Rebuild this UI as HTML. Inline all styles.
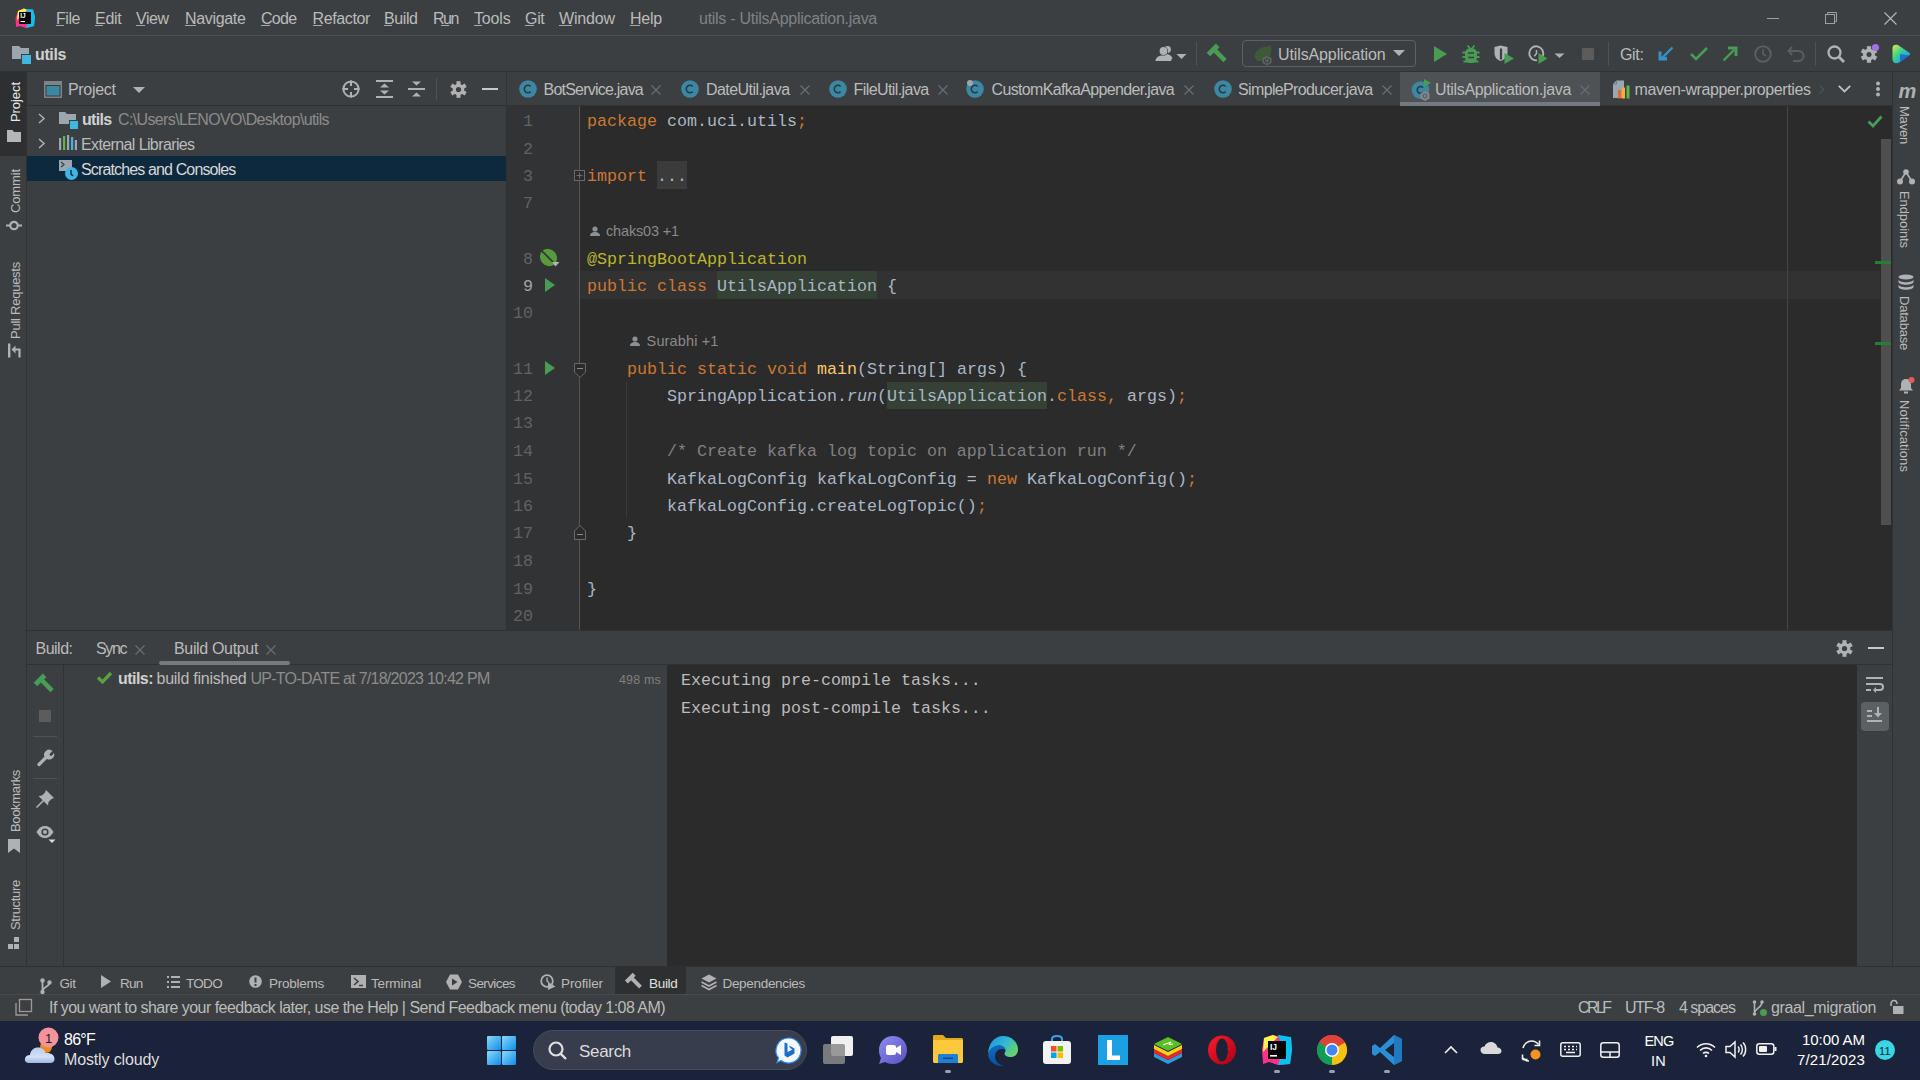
<!DOCTYPE html>
<html><head><meta charset="utf-8"><title>IntelliJ</title>
<style>
*{margin:0;padding:0;box-sizing:border-box}
html,body{width:1920px;height:1080px;overflow:hidden;background:#3c3f41}
body{position:relative;font-family:"Liberation Sans",sans-serif;font-size:15px;color:#bbbbbb}
.a{position:absolute}
.t{position:absolute;white-space:pre;line-height:1}
svg{position:absolute;overflow:visible}
</style></head><body>
<div class="a" style="left:0px;top:0px;width:1920px;height:35px;background:#3c3f41"></div>
<div class="a" style="left:0px;top:35px;width:1920px;height:1px;background:#505050"></div>
<div class="a" style="left:0px;top:36px;width:1920px;height:35px;background:#3c3f41"></div>
<div class="a" style="left:0px;top:71px;width:1920px;height:1px;background:#313131"></div>
<svg style="left:15px;top:8px" width="20" height="20"><polygon points="3,3 9,0.5 13,2 18,1.5 20,9 19,18 11,20 5,18 1,19 0.5,10" fill="#ff318c"/>
<polygon points="11,1 18,1.5 20,9 19,18 11,20 14,9" fill="#07c3f2"/>
<polygon points="3,3 9,0.5 12,2 2,12" fill="#fcf84a"/>
<rect x="4" y="4" width="12" height="12" fill="#000"/>
<text x="5.3" y="10.2" font-size="6.5" font-weight="bold" fill="#fff" font-family="Liberation Sans">IJ</text>
<rect x="5.5" y="13" width="4.5" height="1.1" fill="#fff"/></svg>
<div class="t" style="left:56px;top:11px;font:16px 'Liberation Sans';line-height:1;color:#bbbbbb;letter-spacing:-0.445px">File</div>
<div class="a" style="left:56px;top:25px;width:8px;height:1px;background:#a8a8a8"></div>
<div class="t" style="left:95px;top:11px;font:16px 'Liberation Sans';line-height:1;color:#bbbbbb;letter-spacing:-0.270px">Edit</div>
<div class="a" style="left:95px;top:25px;width:8px;height:1px;background:#a8a8a8"></div>
<div class="t" style="left:136px;top:11px;font:16px 'Liberation Sans';line-height:1;color:#bbbbbb;letter-spacing:-0.473px">View</div>
<div class="a" style="left:136px;top:25px;width:9px;height:1px;background:#a8a8a8"></div>
<div class="t" style="left:185px;top:11px;font:16px 'Liberation Sans';line-height:1;color:#bbbbbb;letter-spacing:-0.332px">Navigate</div>
<div class="a" style="left:185px;top:25px;width:11px;height:1px;background:#a8a8a8"></div>
<div class="t" style="left:261px;top:11px;font:16px 'Liberation Sans';line-height:1;color:#bbbbbb;letter-spacing:-0.688px">Code</div>
<div class="a" style="left:261px;top:25px;width:9px;height:1px;background:#a8a8a8"></div>
<div class="t" style="left:312.5px;top:11px;font:16px 'Liberation Sans';line-height:1;color:#bbbbbb;letter-spacing:-0.371px">Refactor</div>
<div class="a" style="left:312.5px;top:25px;width:9px;height:1px;background:#a8a8a8"></div>
<div class="t" style="left:384px;top:11px;font:16px 'Liberation Sans';line-height:1;color:#bbbbbb;letter-spacing:-0.416px">Build</div>
<div class="a" style="left:384px;top:25px;width:8px;height:1px;background:#a8a8a8"></div>
<div class="t" style="left:433px;top:11px;font:16px 'Liberation Sans';line-height:1;color:#bbbbbb;letter-spacing:-1.453px">Run</div>
<div class="a" style="left:441px;top:25px;width:8px;height:1px;background:#a8a8a8"></div>
<div class="t" style="left:474px;top:11px;font:16px 'Liberation Sans';line-height:1;color:#bbbbbb;letter-spacing:-0.172px">Tools</div>
<div class="a" style="left:474px;top:25px;width:8px;height:1px;background:#a8a8a8"></div>
<div class="t" style="left:525px;top:11px;font:16px 'Liberation Sans';line-height:1;color:#bbbbbb;letter-spacing:-0.318px">Git</div>
<div class="a" style="left:525px;top:25px;width:9px;height:1px;background:#a8a8a8"></div>
<div class="t" style="left:559px;top:11px;font:16px 'Liberation Sans';line-height:1;color:#bbbbbb;letter-spacing:-0.151px">Window</div>
<div class="a" style="left:559px;top:25px;width:13px;height:1px;background:#a8a8a8"></div>
<div class="t" style="left:630px;top:11px;font:16px 'Liberation Sans';line-height:1;color:#bbbbbb;letter-spacing:-0.227px">Help</div>
<div class="a" style="left:630px;top:25px;width:10px;height:1px;background:#a8a8a8"></div>
<div class="t" style="left:699px;top:11px;font:16px 'Liberation Sans';line-height:1;color:#808284;letter-spacing:-0.271px">utils - UtilsApplication.java</div>
<div class="a" style="left:1767px;top:18px;width:12px;height:1px;background:#a0a0a0"></div>
<svg style="left:1825px;top:12px" width="13" height="13"><rect x="0.5" y="2.5" width="9" height="9" fill="none" stroke="#a0a0a0"/><path d="M2.5 2.5V0.5H11.5V9.5H9.5" fill="none" stroke="#a0a0a0"/></svg>
<svg style="left:1884px;top:12px" width="13" height="13"><path d="M0.5 0.5L12.5 12.5M12.5 0.5L0.5 12.5" stroke="#b8b8b8" stroke-width="1.1"/></svg>
<svg style="left:12px;top:46px" width="19" height="18"><path d="M0 0H7L9 2H17V13H0Z" fill="#9aa7b0"/><rect x="9" y="8" width="10" height="10" fill="#3c3f41"/><rect x="10" y="9" width="9" height="9" fill="#40b6e0"/></svg>
<div class="t" style="left:35px;top:47px;font:bold 16px 'Liberation Sans';line-height:1;color:#cfcfcf;letter-spacing:-0.378px">utils</div>
<svg style="left:1155px;top:45px" width="34" height="18"><circle cx="12.5" cy="4.5" r="3.4" fill="#afb1b3"/><path d="M9.5 9C13 8.5 17 10 17.5 14H12Z" fill="#afb1b3"/><circle cx="3.5" cy="3.5" r="0" fill="none"/><circle cx="8.5" cy="6" r="4.6" fill="#3c3f41"/><circle cx="8.5" cy="6" r="3.9" fill="#afb1b3"/><path d="M0.5 16C0.5 12.5 3.5 10.5 8.5 10.5C13.5 10.5 16.5 12.5 16.5 16Z" fill="#afb1b3"/><path d="M21.5 9H31.5L26.5 14Z" fill="#afb1b3"/></svg>
<div class="a" style="left:1196px;top:42px;width:1px;height:24px;background:#505355"></div>
<svg style="left:1208px;top:44px" width="20" height="19"><g transform="translate(10 9.5) rotate(-45)"><rect x="-7.5" y="-8.5" width="13" height="5" fill="#499c54"/><rect x="-2.3" y="-4" width="4.6" height="14" fill="#499c54"/></g></svg>
<div class="a" style="left:1242px;top:40px;width:174px;height:27px;background:transparent;border:1px solid #5e6163;border-radius:4px"></div>
<svg style="left:1254px;top:45px" width="22" height="22"><path d="M0.5 12C0.5 6.5 6 2.5 11 2C13.5 1.8 15.5 1 16.5 0C18 4 17.5 9 14.5 12.5C11.5 15.5 7 16.5 3 16Z" fill="#3c5a38"/><polygon points="13,10.5 17.5,13 17.5,18 13,20.5 8.5,18 8.5,13" fill="#5c6367"/><path d="M11.3 13.8A2.4 2.4 0 1 0 14.7 13.8M13 12.3V15" fill="none" stroke="#3c3f41" stroke-width="1.1"/></svg>
<div class="t" style="left:1278px;top:47px;font:16px 'Liberation Sans';line-height:1;color:#bbbbbb;letter-spacing:-0.118px">UtilsApplication</div>
<svg style="left:1393px;top:50px" width="12" height="8"><path d="M0 0H12L6 6Z" fill="#afb1b3"/></svg>
<svg style="left:1434px;top:46px" width="14" height="16"><path d="M0 0L13 8L0 16Z" fill="#499c54"/></svg>
<svg style="left:1462px;top:44px" width="18" height="20"><path d="M5.5 1.5L8 4.5M12.5 1.5L10 4.5" stroke="#499c54" stroke-width="1.8"/><rect x="3" y="4" width="12" height="15" rx="5.5" fill="#499c54"/><path d="M0.5 8.5H17.5M0.5 13H17.5M1.5 17.5H16.5" stroke="#499c54" stroke-width="2"/><path d="M6 9H12M6 13.5H12" stroke="#3c3f41" stroke-width="1.6"/></svg>
<svg style="left:1494px;top:45px" width="20" height="20"><path d="M0.5 2L6.5 0.5L13.5 2V8C13.5 12 10.5 14.5 6.5 16C2.5 14.5 0.5 12 0.5 8Z" fill="#afb1b3"/><path d="M7 3.5V14.5" stroke="#3c3f41" stroke-width="2.2"/><path d="M9 3H13V5H9Z" fill="#afb1b3"/><path d="M10.5 8L20 13.5L10.5 19Z" fill="#499c54"/></svg>
<svg style="left:1528px;top:45px" width="40" height="20"><path d="M14.5 11.5A7 7 0 1 0 9 15.3" fill="none" stroke="#afb1b3" stroke-width="1.9"/><path d="M8.5 5V8.5L6.3 11.3" stroke="#afb1b3" stroke-width="1.5" fill="none"/><path d="M10.5 8L19.5 13.5L10.5 19Z" fill="#499c54"/><path d="M26.5 8.5H36.5L31.5 13Z" fill="#afb1b3"/></svg>
<div class="a" style="left:1582px;top:48px;width:12px;height:12px;background:#5c5c5c"></div>
<div class="a" style="left:1608px;top:42px;width:1px;height:24px;background:#505355"></div>
<div class="t" style="left:1620px;top:47px;font:16px 'Liberation Sans';line-height:1;color:#bbbbbb;letter-spacing:-0.348px">Git:</div>
<svg style="left:1658px;top:46px" width="16" height="16"><path d="M14.5 1.5L4 12" stroke="#3592c4" stroke-width="2.4"/><path d="M0.5 5.5H3.5V11L9 11V14.5H0.5Z" fill="#3592c4"/></svg>
<svg style="left:1690px;top:47px" width="18" height="14"><path d="M1 7L6 12L17 1" stroke="#499c54" stroke-width="2.6" fill="none"/></svg>
<svg style="left:1722px;top:46px" width="16" height="16"><path d="M1.5 14.5L12 4" stroke="#499c54" stroke-width="2.4"/><path d="M6 0.5H15.5V10H12.5V3.5H6Z" fill="#499c54"/></svg>
<svg style="left:1754px;top:45px" width="18" height="18"><circle cx="9" cy="9" r="7.8" fill="none" stroke="#5b5e60" stroke-width="2"/><path d="M9 4V9L12 11" stroke="#5b5e60" stroke-width="1.6" fill="none"/></svg>
<svg style="left:1787px;top:46px" width="18" height="16"><path d="M5 1L1.5 5L5 9M1.5 5H11C14 5 16.5 7 16.5 10C16.5 13 14 15 11 15H6" stroke="#5b5e60" stroke-width="2" fill="none"/></svg>
<div class="a" style="left:1815px;top:42px;width:1px;height:24px;background:#505355"></div>
<svg style="left:1827px;top:45px" width="18" height="18"><circle cx="7.5" cy="7.5" r="6" fill="none" stroke="#afb1b3" stroke-width="2.3"/><path d="M12 12L17 17" stroke="#afb1b3" stroke-width="2.8"/></svg>
<svg style="left:1859px;top:44px" width="20" height="20"><g transform="translate(10 10.5)"><circle r="6" fill="#afb1b3"/><g fill="#afb1b3"><rect x="-2.1" y="-8.3" width="4.2" height="16.6"/><rect x="-2.1" y="-8.3" width="4.2" height="16.6" transform="rotate(60)"/><rect x="-2.1" y="-8.3" width="4.2" height="16.6" transform="rotate(120)"/></g><circle r="2.5" fill="#3c3f41"/></g><circle cx="16.5" cy="3.5" r="3.6" fill="#a571e6"/></svg>
<svg style="left:1891px;top:44px" width="20" height="20"><defs><linearGradient id="jg" x1="0" y1="0" x2="1" y2="1"><stop offset="0" stop-color="#e6e84a"/><stop offset=".4" stop-color="#3fd38a"/><stop offset=".75" stop-color="#19a6e6"/><stop offset="1" stop-color="#2a6fdc"/></linearGradient></defs><path d="M1.5 4C1.5 1 4 0 7 1L18 8.5C19.5 9.5 19.5 10.5 18 11.5L9 18C5 20.5 1.5 19 1.5 15Z" fill="url(#jg)"/><path d="M9 10L18 11.5L9 18Z" fill="#1c5fd8" opacity=".8"/></svg>
<div class="a" style="left:0px;top:72px;width:26px;height:894px;background:#3c3f41"></div>
<div class="a" style="left:0px;top:72px;width:26px;height:84px;background:#2d2f30"></div>
<div class="a" style="left:26px;top:72px;width:1px;height:894px;background:#313131"></div>
<div class="t" style="left:9px;top:-11px;font:13px 'Liberation Sans';line-height:1;color:#e8e8e8;letter-spacing:-0.067px;top:122px;transform:rotate(-90deg);transform-origin:0 0">Project</div>
<svg style="left:7px;top:130px" width="14" height="12"><path d="M0 0H5.5L7 2H14V12H0Z" fill="#b4b6b8"/></svg>
<div class="t" style="left:9px;top:-11px;font:13px 'Liberation Sans';line-height:1;color:#bbbbbb;letter-spacing:-0.130px;top:213px;transform:rotate(-90deg);transform-origin:0 0">Commit</div>
<svg style="left:6px;top:220px" width="16" height="11"><circle cx="8" cy="5.5" r="3.7" fill="none" stroke="#afb1b3" stroke-width="2.2"/><path d="M0 5.5H4M12 5.5H16" stroke="#afb1b3" stroke-width="2.2"/></svg>
<div class="t" style="left:9px;top:-11px;font:13px 'Liberation Sans';line-height:1;color:#bbbbbb;letter-spacing:-0.248px;top:339px;transform:rotate(-90deg);transform-origin:0 0">Pull Requests</div>
<svg style="left:8px;top:343px" width="14" height="15"><path d="M1.2 0.5V14.5" stroke="#afb1b3" stroke-width="2.4"/><path d="M11.5 14.5V6.5H7" stroke="#afb1b3" stroke-width="2.2" fill="none"/><path d="M3.5 6.5L7.5 2.5V10.5Z" fill="#afb1b3"/></svg>
<div class="t" style="left:9px;top:-11px;font:13px 'Liberation Sans';line-height:1;color:#bbbbbb;letter-spacing:-0.337px;top:832px;transform:rotate(-90deg);transform-origin:0 0">Bookmarks</div>
<svg style="left:8px;top:839px" width="12" height="14"><path d="M0 0H12V14L6 9.5L0 14Z" fill="#afb1b3"/></svg>
<div class="t" style="left:9px;top:-11px;font:13px 'Liberation Sans';line-height:1;color:#bbbbbb;letter-spacing:-0.306px;top:930px;transform:rotate(-90deg);transform-origin:0 0">Structure</div>
<svg style="left:8px;top:937px" width="13" height="13"><rect x="6" y="0" width="5" height="5" fill="#afb1b3"/><rect x="0" y="7" width="5" height="5" fill="#afb1b3"/><rect x="6" y="7" width="5" height="5" fill="#afb1b3"/></svg>
<div class="a" style="left:27px;top:72px;width:479px;height:558px;background:#3c3f41"></div>
<div class="a" style="left:27px;top:105px;width:479px;height:1px;background:#313131"></div>
<div class="a" style="left:27px;top:156px;width:479px;height:25px;background:#0d293e"></div>
<div class="a" style="left:506px;top:72px;width:1px;height:558px;background:#313131"></div>
<svg style="left:44px;top:81px" width="18" height="17"><rect x="0" y="0" width="18" height="17" fill="#7a858b"/><rect x="1.5" y="4" width="15" height="11.5" fill="#3a3d3f"/><rect x="2.5" y="5" width="13" height="9.5" fill="#3d87a2"/></svg>
<div class="t" style="left:68px;top:82px;font:16px 'Liberation Sans';line-height:1;color:#bbbbbb;letter-spacing:-0.328px">Project</div>
<svg style="left:133px;top:87px" width="12" height="7"><path d="M0 0H12L6 6Z" fill="#afb1b3"/></svg>
<svg style="left:342px;top:80px" width="18" height="18"><circle cx="9" cy="9" r="7.6" fill="none" stroke="#afb1b3" stroke-width="2"/><path d="M9 0.5V6M9 12V17.5M0.5 9H6M12 9H17.5" stroke="#afb1b3" stroke-width="2"/></svg>
<svg style="left:376px;top:80px" width="17" height="18"><path d="M0 1H17M0 17H17" stroke="#afb1b3" stroke-width="2"/><path d="M4 7.5L8.5 3.5L13 7.5Z M4 10.5L8.5 14.5L13 10.5Z" fill="#afb1b3"/></svg>
<svg style="left:408px;top:80px" width="17" height="18"><path d="M0 9H17" stroke="#afb1b3" stroke-width="2"/><path d="M4 1.5L8.5 5.5L13 1.5Z M4 16.5L8.5 12.5L13 16.5Z" fill="#afb1b3"/></svg>
<div class="a" style="left:436px;top:78px;width:1px;height:22px;background:#505355"></div>
<svg style="left:450px;top:81px" width="17" height="17" viewBox="-8.5 -8.5 17 17"><circle r="5.8" fill="#afb1b3"/><g fill="#afb1b3"><rect x="-2" y="-8.3" width="4" height="16.6"/><rect x="-2" y="-8.3" width="4" height="16.6" transform="rotate(60)"/><rect x="-2" y="-8.3" width="4" height="16.6" transform="rotate(120)"/></g><circle r="2.6" fill="#3c3f41"/></svg>
<div class="a" style="left:482px;top:88px;width:16px;height:2px;background:#c8c8c8"></div>
<svg style="left:38px;top:113px" width="8" height="11"><path d="M1 1L6 5.5L1 10" stroke="#afb1b3" stroke-width="1.5" fill="none"/></svg>
<svg style="left:59px;top:112px" width="19" height="17"><path d="M0 0H6L8 2H17V12H0Z" fill="#9aa7b0"/><rect x="10" y="8" width="9" height="9" fill="#3c3f41"/><rect x="11" y="9" width="8" height="8" fill="#40b6e0"/></svg>
<div class="t" style="left:82px;top:112px;font:bold 16px 'Liberation Sans';line-height:1;color:#d0d0d0;letter-spacing:-0.678px">utils</div>
<div class="t" style="left:118px;top:112px;font:16px 'Liberation Sans';line-height:1;color:#8c8c8c;letter-spacing:-0.635px">C:\Users\LENOVO\Desktop\utils</div>
<svg style="left:38px;top:138px" width="8" height="11"><path d="M1 1L6 5.5L1 10" stroke="#afb1b3" stroke-width="1.5" fill="none"/></svg>
<svg style="left:59px;top:135px" width="18" height="15"><rect x="0" y="3" width="2.2" height="12" fill="#9aa7b0"/><rect x="4" y="1" width="2.2" height="14" fill="#62b543"/><rect x="8" y="0" width="2.2" height="15" fill="#9aa7b0"/><rect x="12" y="2" width="2.2" height="13" fill="#40b6e0"/><rect x="15.8" y="5" width="2.2" height="10" fill="#9aa7b0"/></svg>
<div class="t" style="left:81px;top:137px;font:16px 'Liberation Sans';line-height:1;color:#bbbbbb;letter-spacing:-0.611px">External Libraries</div>
<svg style="left:59px;top:160px" width="19" height="20"><rect x="0" y="0" width="13" height="11" fill="#9aa7b0"/><path d="M2 2L5 4.5L2 7" stroke="#3c3f41" stroke-width="1.2" fill="none"/><circle cx="12.5" cy="13.5" r="6.5" fill="#40b6e0"/><path d="M12 10V14L14 16" stroke="#0d293e" stroke-width="1.5" fill="none"/></svg>
<div class="t" style="left:81px;top:162px;font:16px 'Liberation Sans';line-height:1;color:#d8d8d8;letter-spacing:-0.861px">Scratches and Consoles</div>
<div class="a" style="left:1892px;top:72px;width:1px;height:894px;background:#313131"></div>
<div class="a" style="left:1893px;top:72px;width:27px;height:894px;background:#3c3f41"></div>
<div class="t" style="left:1898.5px;top:81px;font:italic bold 20px 'Liberation Sans';line-height:1;color:#afb1b3;letter-spacing:-0.797px">m</div>
<div class="t" style="left:1911px;top:-11px;font:13px 'Liberation Sans';line-height:1;color:#bbbbbb;letter-spacing:-0.206px;top:106px;transform:rotate(90deg);transform-origin:0 0">Maven</div>
<svg style="left:1897px;top:169px" width="18" height="16"><circle cx="9" cy="3" r="2.8" fill="#afb1b3"/><circle cx="3" cy="12.5" r="3" fill="#afb1b3"/><circle cx="15" cy="12.5" r="3" fill="#afb1b3"/><path d="M9 3L3 12.5M9 3L15 12.5" stroke="#afb1b3" stroke-width="1.6"/></svg>
<div class="t" style="left:1911px;top:-11px;font:13px 'Liberation Sans';line-height:1;color:#bbbbbb;letter-spacing:-0.092px;top:191px;transform:rotate(90deg);transform-origin:0 0">Endpoints</div>
<svg style="left:1898px;top:274px" width="16" height="16"><ellipse cx="8" cy="3" rx="7.5" ry="2.6" fill="#afb1b3"/><path d="M0.5 5.5C0.5 7 4 8.2 8 8.2C12 8.2 15.5 7 15.5 5.5V8C15.5 9.5 12 10.7 8 10.7C4 10.7 0.5 9.5 0.5 8Z" fill="#afb1b3"/><path d="M0.5 10.5C0.5 12 4 13.2 8 13.2C12 13.2 15.5 12 15.5 10.5V13C15.5 14.5 12 15.7 8 15.7C4 15.7 0.5 14.5 0.5 13Z" fill="#afb1b3"/></svg>
<div class="t" style="left:1911px;top:-11px;font:13px 'Liberation Sans';line-height:1;color:#bbbbbb;letter-spacing:-0.207px;top:296px;transform:rotate(90deg);transform-origin:0 0">Database</div>
<svg style="left:1898px;top:377px" width="17" height="17"><path d="M8 2C4.5 2 3 4.5 3 7.5V11L1 13.5H15L13 11V7.5C13 4.5 11.5 2 8 2Z" fill="#afb1b3"/><rect x="6" y="14.5" width="4" height="2" fill="#afb1b3"/><circle cx="13.5" cy="3" r="3" fill="#e55a5a"/></svg>
<div class="t" style="left:1911px;top:-11px;font:13px 'Liberation Sans';line-height:1;color:#bbbbbb;letter-spacing:0.091px;top:400px;transform:rotate(90deg);transform-origin:0 0">Notifications</div>
<div class="a" style="left:507px;top:72px;width:1385px;height:33px;background:#3c3f41"></div>
<div class="a" style="left:507px;top:105px;width:1385px;height:1px;background:#323232"></div>
<div class="a" style="left:1400px;top:72px;width:200px;height:33px;background:#4e5254"></div>
<div class="a" style="left:1400px;top:102px;width:200px;height:4px;background:#747a80"></div>
<svg style="left:518px;top:79px" width="20" height="20"><circle cx="10" cy="10" r="8.8" fill="#3d87a2"/><path d="M12.6 7.4A3.7 3.7 0 1 0 12.6 12.6" fill="none" stroke="#243a45" stroke-width="1.5"/></svg>
<div class="t" style="left:543.5px;top:82px;font:16px 'Liberation Sans';line-height:1;color:#bbbbbb;letter-spacing:-0.778px">BotService.java</div>
<svg style="left:651px;top:84.5px" width="10" height="10"><path d="M0.5 0.5L9.5 9.5M9.5 0.5L0.5 9.5" stroke="#6b6d6f" stroke-width="1.2"/></svg>
<svg style="left:680px;top:79px" width="20" height="20"><circle cx="10" cy="10" r="8.8" fill="#3d87a2"/><path d="M12.6 7.4A3.7 3.7 0 1 0 12.6 12.6" fill="none" stroke="#243a45" stroke-width="1.5"/></svg>
<div class="t" style="left:706px;top:82px;font:16px 'Liberation Sans';line-height:1;color:#bbbbbb;letter-spacing:-0.554px">DateUtil.java</div>
<svg style="left:799.5px;top:84.5px" width="10" height="10"><path d="M0.5 0.5L9.5 9.5M9.5 0.5L0.5 9.5" stroke="#6b6d6f" stroke-width="1.2"/></svg>
<svg style="left:828px;top:79px" width="20" height="20"><circle cx="10" cy="10" r="8.8" fill="#3d87a2"/><path d="M12.6 7.4A3.7 3.7 0 1 0 12.6 12.6" fill="none" stroke="#243a45" stroke-width="1.5"/></svg>
<div class="t" style="left:853.6px;top:82px;font:16px 'Liberation Sans';line-height:1;color:#bbbbbb;letter-spacing:-0.591px">FileUtil.java</div>
<svg style="left:938px;top:84.5px" width="10" height="10"><path d="M0.5 0.5L9.5 9.5M9.5 0.5L0.5 9.5" stroke="#6b6d6f" stroke-width="1.2"/></svg>
<svg style="left:965px;top:79px" width="20" height="20"><circle cx="10" cy="10" r="8.8" fill="#3d87a2"/><path d="M12.6 7.4A3.7 3.7 0 1 0 12.6 12.6" fill="none" stroke="#243a45" stroke-width="1.5"/></svg>
<div class="t" style="left:991.5px;top:82px;font:16px 'Liberation Sans';line-height:1;color:#bbbbbb;letter-spacing:-0.660px">CustomKafkaAppender.java</div>
<svg style="left:1184px;top:84.5px" width="10" height="10"><path d="M0.5 0.5L9.5 9.5M9.5 0.5L0.5 9.5" stroke="#6b6d6f" stroke-width="1.2"/></svg>
<svg style="left:1213px;top:79px" width="20" height="20"><circle cx="10" cy="10" r="8.8" fill="#3d87a2"/><path d="M12.6 7.4A3.7 3.7 0 1 0 12.6 12.6" fill="none" stroke="#243a45" stroke-width="1.5"/></svg>
<div class="t" style="left:1238px;top:82px;font:16px 'Liberation Sans';line-height:1;color:#bbbbbb;letter-spacing:-0.639px">SimpleProducer.java</div>
<svg style="left:1381.6px;top:84.5px" width="10" height="10"><path d="M0.5 0.5L9.5 9.5M9.5 0.5L0.5 9.5" stroke="#6b6d6f" stroke-width="1.2"/></svg>
<div class="t" style="left:1435px;top:82px;font:16px 'Liberation Sans';line-height:1;color:#bbbbbb;letter-spacing:-0.342px">UtilsApplication.java</div>
<svg style="left:1580px;top:84.5px" width="10" height="10"><path d="M0.5 0.5L9.5 9.5M9.5 0.5L0.5 9.5" stroke="#6b6d6f" stroke-width="1.2"/></svg>
<svg style="left:966px;top:79px" width="8" height="8"><circle cx="4" cy="4" r="3" fill="#9aa7b0"/></svg>
<svg style="left:1411px;top:79px" width="22" height="22"><circle cx="9.5" cy="11" r="8.8" fill="#3d87a2"/><path d="M12 8.6A3.4 3.4 0 1 0 12 13.4" fill="none" stroke="#243a45" stroke-width="1.5"/><path d="M13 0L20 4L13 8Z" fill="#499c54"/><polygon points="14,12 18.5,14.5 18.5,19.5 14,22 9.5,19.5 9.5,14.5" fill="#7e8a91"/><circle cx="14" cy="17" r="2" fill="none" stroke="#4e5254" stroke-width="1"/></svg>
<svg style="left:1612px;top:80px" width="19" height="19"><path d="M1 4L4.5 0.5H12V18H1Z" fill="#9aa7b0"/><path d="M1 4H4.5V0.5" fill="none" stroke="#6f7a80" stroke-width="1"/><rect x="6" y="10" width="3" height="8.5" fill="#f26522"/><rect x="10" y="7.5" width="3" height="11" fill="#f4af3d"/><rect x="14.5" y="5.5" width="3" height="13" fill="#62b543"/></svg>
<div class="t" style="left:1634.5px;top:82px;font:16px 'Liberation Sans';line-height:1;color:#bbbbbb;letter-spacing:-0.411px">maven-wrapper.properties</div>
<svg style="left:1819px;top:85px" width="6" height="9"><path d="M0.5 0.5L5 4.5L0.5 8.5" stroke="#4f5355" stroke-width="1.2" fill="none"/></svg>
<svg style="left:1838px;top:85px" width="13" height="8"><path d="M0.8 0.8L6.5 6.5L12.2 0.8" stroke="#c0c0c0" stroke-width="1.8" fill="none"/></svg>
<svg style="left:1875px;top:81px" width="6" height="17"><circle cx="3" cy="2.5" r="2" fill="#afb1b3"/><circle cx="3" cy="8" r="2" fill="#afb1b3"/><circle cx="3" cy="13.5" r="2" fill="#afb1b3"/></svg>
<div class="a" style="left:507px;top:106px;width:72px;height:524px;background:#313335"></div>
<div class="a" style="left:580px;top:106px;width:1312px;height:524px;background:#2b2b2b"></div>
<div class="a" style="left:579px;top:106px;width:1px;height:524px;background:#555555"></div>
<div class="a" style="left:580px;top:271px;width:1300px;height:27.5px;background:#323232"></div>
<div class="a" style="left:1787px;top:106px;width:1px;height:524px;background:#454545"></div>
<div class="a" style="left:1881px;top:139px;width:10px;height:386px;background:#4f4f4f"></div>
<div class="a" style="left:1875px;top:261px;width:16px;height:3px;background:#24802e"></div>
<div class="a" style="left:1875px;top:342px;width:16px;height:3px;background:#24802e"></div>
<svg style="left:1867px;top:115px" width="16" height="13"><path d="M1.5 6.5L6 11L14.5 1.5" stroke="#499c54" stroke-width="2.8" fill="none"/></svg>
<div class="t" style="left:523.0px;top:114px;font:16.667px 'Liberation Mono';line-height:1;color:#606366">1</div>
<div class="t" style="left:523.0px;top:142px;font:16.667px 'Liberation Mono';line-height:1;color:#606366">2</div>
<div class="t" style="left:523.0px;top:169px;font:16.667px 'Liberation Mono';line-height:1;color:#606366">3</div>
<div class="t" style="left:523.0px;top:196px;font:16.667px 'Liberation Mono';line-height:1;color:#606366">7</div>
<div class="t" style="left:523.0px;top:252px;font:16.667px 'Liberation Mono';line-height:1;color:#606366">8</div>
<div class="t" style="left:523.0px;top:279px;font:16.667px 'Liberation Mono';line-height:1;color:#a4a3a3">9</div>
<div class="t" style="left:513.0px;top:306px;font:16.667px 'Liberation Mono';line-height:1;color:#606366">10</div>
<div class="t" style="left:513.0px;top:362px;font:16.667px 'Liberation Mono';line-height:1;color:#606366">11</div>
<div class="t" style="left:513.0px;top:389px;font:16.667px 'Liberation Mono';line-height:1;color:#606366">12</div>
<div class="t" style="left:513.0px;top:416px;font:16.667px 'Liberation Mono';line-height:1;color:#606366">13</div>
<div class="t" style="left:513.0px;top:444px;font:16.667px 'Liberation Mono';line-height:1;color:#606366">14</div>
<div class="t" style="left:513.0px;top:472px;font:16.667px 'Liberation Mono';line-height:1;color:#606366">15</div>
<div class="t" style="left:513.0px;top:499px;font:16.667px 'Liberation Mono';line-height:1;color:#606366">16</div>
<div class="t" style="left:513.0px;top:526px;font:16.667px 'Liberation Mono';line-height:1;color:#606366">17</div>
<div class="t" style="left:513.0px;top:554px;font:16.667px 'Liberation Mono';line-height:1;color:#606366">18</div>
<div class="t" style="left:513.0px;top:582px;font:16.667px 'Liberation Mono';line-height:1;color:#606366">19</div>
<div class="t" style="left:513.0px;top:609px;font:16.667px 'Liberation Mono';line-height:1;color:#606366">20</div>
<div class="a" style="left:657px;top:161px;width:30px;height:27.5px;background:#3b3b3b"></div>
<div class="a" style="left:717px;top:271px;width:160px;height:27.5px;background:#344134"></div>
<div class="a" style="left:887px;top:381.5px;width:160px;height:27.5px;background:#344134"></div>
<div class="t" style="left:587px;top:114px;font:16.667px 'Liberation Mono';line-height:1;color:#cc7832">package </div>
<div class="t" style="left:667px;top:114px;font:16.667px 'Liberation Mono';line-height:1;color:#a9b7c6">com.uci.utils</div>
<div class="t" style="left:797px;top:114px;font:16.667px 'Liberation Mono';line-height:1;color:#cc7832">;</div>
<div class="t" style="left:587px;top:169px;font:16.667px 'Liberation Mono';line-height:1;color:#cc7832">import </div>
<div class="t" style="left:657px;top:169px;font:16.667px 'Liberation Mono';line-height:1;color:#a9b7c6">...</div>
<div class="t" style="left:587px;top:252px;font:16.667px 'Liberation Mono';line-height:1;color:#bbb529">@SpringBootApplication</div>
<div class="t" style="left:587px;top:279px;font:16.667px 'Liberation Mono';line-height:1;color:#cc7832">public class </div>
<div class="t" style="left:717px;top:279px;font:16.667px 'Liberation Mono';line-height:1;color:#a9b7c6">UtilsApplication </div>
<div class="t" style="left:887px;top:279px;font:16.667px 'Liberation Mono';line-height:1;color:#a9b7c6">{</div>
<div class="t" style="left:627px;top:362px;font:16.667px 'Liberation Mono';line-height:1;color:#cc7832">public static void </div>
<div class="t" style="left:817px;top:362px;font:16.667px 'Liberation Mono';line-height:1;color:#ffc66d">main</div>
<div class="t" style="left:857px;top:362px;font:16.667px 'Liberation Mono';line-height:1;color:#a9b7c6">(String[] args) {</div>
<div class="t" style="left:667px;top:389px;font:16.667px 'Liberation Mono';line-height:1;color:#a9b7c6">SpringApplication.</div>
<div class="t" style="left:847px;top:389px;font:italic 16.667px 'Liberation Mono';line-height:1;color:#a9b7c6">run</div>
<div class="t" style="left:877px;top:389px;font:16.667px 'Liberation Mono';line-height:1;color:#a9b7c6">(UtilsApplication</div>
<div class="t" style="left:1047px;top:389px;font:16.667px 'Liberation Mono';line-height:1;color:#a9b7c6">.</div>
<div class="t" style="left:1057px;top:389px;font:16.667px 'Liberation Mono';line-height:1;color:#cc7832">class, </div>
<div class="t" style="left:1127px;top:389px;font:16.667px 'Liberation Mono';line-height:1;color:#a9b7c6">args)</div>
<div class="t" style="left:1177px;top:389px;font:16.667px 'Liberation Mono';line-height:1;color:#cc7832">;</div>
<div class="t" style="left:667px;top:444px;font:16.667px 'Liberation Mono';line-height:1;color:#808080">/* Create kafka log topic on application run */</div>
<div class="t" style="left:667px;top:472px;font:16.667px 'Liberation Mono';line-height:1;color:#a9b7c6">KafkaLogConfig kafkaLogConfig = </div>
<div class="t" style="left:987px;top:472px;font:16.667px 'Liberation Mono';line-height:1;color:#cc7832">new </div>
<div class="t" style="left:1027px;top:472px;font:16.667px 'Liberation Mono';line-height:1;color:#a9b7c6">KafkaLogConfig()</div>
<div class="t" style="left:1187px;top:472px;font:16.667px 'Liberation Mono';line-height:1;color:#cc7832">;</div>
<div class="t" style="left:667px;top:499px;font:16.667px 'Liberation Mono';line-height:1;color:#a9b7c6">kafkaLogConfig.createLogTopic()</div>
<div class="t" style="left:977px;top:499px;font:16.667px 'Liberation Mono';line-height:1;color:#cc7832">;</div>
<div class="t" style="left:627px;top:526px;font:16.667px 'Liberation Mono';line-height:1;color:#a9b7c6">}</div>
<div class="t" style="left:587px;top:582px;font:16.667px 'Liberation Mono';line-height:1;color:#a9b7c6">}</div>
<svg style="left:590px;top:226px" width="10" height="10"><circle cx="5" cy="3" r="2.6" fill="#8c9196"/><path d="M0 10C0 7 2.5 6 5 6C7.5 6 10 7 10 10Z" fill="#8c9196"/></svg>
<div class="t" style="left:606px;top:224px;font:14.5px 'Liberation Sans';line-height:1;color:#8a8a8a;letter-spacing:-0.158px">chaks03 +1</div>
<svg style="left:630px;top:336px" width="10" height="10"><circle cx="5" cy="3" r="2.6" fill="#8c9196"/><path d="M0 10C0 7 2.5 6 5 6C7.5 6 10 7 10 10Z" fill="#8c9196"/></svg>
<div class="t" style="left:646.6px;top:334px;font:14.5px 'Liberation Sans';line-height:1;color:#8a8a8a;letter-spacing:0.145px">Surabhi +1</div>
<div class="a" style="left:626px;top:381px;width:1px;height:137px;background:#393939"></div>
<svg style="left:539px;top:247px" width="22" height="22"><ellipse cx="9.5" cy="10.5" rx="8.2" ry="9" transform="rotate(-40 9.5 10.5)" fill="#589a3c"/><path d="M1.5 2.5L16.5 17.5" stroke="#313335" stroke-width="1.7"/><path d="M13 15H20.5L16.5 19.5Z" fill="#b4b4b4"/></svg>
<svg style="left:545px;top:277.5px" width="10" height="14"><path d="M0 0L10 7L0 14Z" fill="#499c54"/></svg>
<svg style="left:545px;top:361px" width="10" height="14"><path d="M0 0L10 7L0 14Z" fill="#499c54"/></svg>
<svg style="left:574px;top:170px" width="11" height="11"><rect x="0.5" y="0.5" width="10" height="10" fill="#2b2b2b" stroke="#6a6a6a"/><path d="M2.5 5.5H8.5M5.5 2.5V8.5" stroke="#6e6e6e"/></svg>
<svg style="left:574px;top:363px" width="12" height="15"><path d="M0.5 0.5H11.5V9L6 14.5L0.5 9Z" fill="#2b2b2b" stroke="#6a6a6a"/><path d="M3 5.5H9" stroke="#8a8a8a"/></svg>
<svg style="left:574px;top:525px" width="12" height="15"><path d="M0.5 14.5H11.5V6L6 0.5L0.5 6Z" fill="#2b2b2b" stroke="#6a6a6a"/><path d="M3 9.5H9" stroke="#8a8a8a"/></svg>
<div class="a" style="left:27px;top:630px;width:1865px;height:1px;background:#313131"></div>
<div class="a" style="left:27px;top:631px;width:1865px;height:33px;background:#3c3f41"></div>
<div class="a" style="left:27px;top:664px;width:1865px;height:1px;background:#313131"></div>
<div class="a" style="left:27px;top:665px;width:36px;height:301px;background:#3c3f41"></div>
<div class="a" style="left:63px;top:665px;width:1px;height:301px;background:#313131"></div>
<div class="a" style="left:64px;top:665px;width:603px;height:301px;background:#3c3f41"></div>
<div class="a" style="left:667px;top:665px;width:1190px;height:301px;background:#2b2b2b"></div>
<div class="a" style="left:1857px;top:665px;width:35px;height:301px;background:#3c3f41"></div>
<div class="t" style="left:35.5px;top:641px;font:16px 'Liberation Sans';line-height:1;color:#bbbbbb;letter-spacing:-0.505px">Build:</div>
<div class="t" style="left:96px;top:641px;font:16px 'Liberation Sans';line-height:1;color:#bbbbbb;letter-spacing:-1.395px">Sync</div>
<svg style="left:135px;top:645px" width="10" height="10"><path d="M0.5 0.5L9.5 9.5M9.5 0.5L0.5 9.5" stroke="#6b6d6f" stroke-width="1.2"/></svg>
<div class="t" style="left:174px;top:641px;font:16px 'Liberation Sans';line-height:1;color:#bbbbbb;letter-spacing:-0.339px">Build Output</div>
<svg style="left:266px;top:645px" width="10" height="10"><path d="M0.5 0.5L9.5 9.5M9.5 0.5L0.5 9.5" stroke="#6b6d6f" stroke-width="1.2"/></svg>
<div class="a" style="left:159px;top:661px;width:131px;height:3.5px;background:#747a80;border-radius:2px"></div>
<svg style="left:1836px;top:640px" width="17" height="17" viewBox="-8.5 -8.5 17 17"><circle r="5.8" fill="#afb1b3"/><g fill="#afb1b3"><rect x="-2" y="-8.3" width="4" height="16.6"/><rect x="-2" y="-8.3" width="4" height="16.6" transform="rotate(60)"/><rect x="-2" y="-8.3" width="4" height="16.6" transform="rotate(120)"/></g><circle r="2.6" fill="#3c3f41"/></svg>
<div class="a" style="left:1868px;top:647px;width:16px;height:2px;background:#c8c8c8"></div>
<svg style="left:35px;top:674px" width="20" height="19"><g transform="translate(10 9.5) rotate(-45)"><rect x="-7.5" y="-8.5" width="13" height="5" fill="#499c54"/><rect x="-2.3" y="-4" width="4.6" height="14" fill="#499c54"/></g></svg>
<div class="a" style="left:39px;top:710px;width:12px;height:12px;background:#5c5c5c"></div>
<div class="a" style="left:33px;top:736px;width:24px;height:1px;background:#505355"></div>
<svg style="left:37px;top:749px" width="17" height="18"><path d="M2 15.5L9.5 8" stroke="#afb1b3" stroke-width="3.2" stroke-linecap="round"/><path d="M8 8.5A5 5 0 0 1 15.5 2L12.5 5L13 6.5L14.5 7L17 4A5 5 0 0 1 10 10Z" fill="#afb1b3"/></svg>
<div class="a" style="left:33px;top:778px;width:24px;height:1px;background:#505355"></div>
<svg style="left:36px;top:790px" width="18" height="18"><path d="M10 0L18 8L15.5 9L12.5 12L12 15.5L2.5 6L6 5.5L9 2.5Z" fill="#afb1b3"/><path d="M7.5 10.5L0.5 17.5" stroke="#afb1b3" stroke-width="1.6"/></svg>
<svg style="left:36px;top:825px" width="20" height="19"><path d="M0.5 7C3 2.5 6 1 9 1C12 1 15 2.5 17.5 7C15 11.5 12 13 9 13C6 13 3 11.5 0.5 7Z" fill="#afb1b3"/><circle cx="9" cy="7" r="3.6" fill="#3c3f41"/><circle cx="9" cy="7" r="2" fill="#afb1b3"/><path d="M12.5 14.5H19.5L16 18Z" fill="#dcdcdc"/></svg>
<svg style="left:96px;top:671px" width="17" height="14"><path d="M2 6.5L6.5 11L15 2" stroke="#59a03e" stroke-width="3.3" fill="none"/></svg>
<div class="t" style="left:118px;top:671px;font:bold 16px 'Liberation Sans';line-height:1;color:#d0d0d0;letter-spacing:-0.536px">utils:</div>
<div class="t" style="left:156.5px;top:671px;font:16px 'Liberation Sans';line-height:1;color:#bbbbbb;letter-spacing:-0.243px">build finished</div>
<div class="t" style="left:250.5px;top:671px;font:16px 'Liberation Sans';line-height:1;color:#8c8c8c;letter-spacing:-0.739px">UP-TO-DATE at 7/18/2023 10:42 PM</div>
<div class="t" style="left:619px;top:674px;font:12.5px 'Liberation Sans';line-height:1;color:#7f7f7f;letter-spacing:0.167px">498 ms</div>
<div class="t" style="left:681px;top:673px;font:16.667px 'Liberation Mono';line-height:1;color:#bbbbbb">Executing pre-compile tasks...</div>
<div class="t" style="left:681px;top:701px;font:16.667px 'Liberation Mono';line-height:1;color:#bbbbbb">Executing post-compile tasks...</div>
<svg style="left:1866px;top:676px" width="18" height="17"><path d="M0 2H17M0 8H14C16 8 17 9 17 11C17 13 16 14 14 14H9" stroke="#afb1b3" stroke-width="2" fill="none"/><path d="M10 11L7 14L10 17Z" fill="#afb1b3"/><path d="M0 14H5" stroke="#afb1b3" stroke-width="2"/></svg>
<div class="a" style="left:1861px;top:702px;width:28px;height:29px;background:#5b6063;border-radius:4px"></div>
<svg style="left:1867px;top:707px" width="18" height="18"><path d="M0 4H5M0 9H5M0 14H15" stroke="#afb1b3" stroke-width="2"/><path d="M11 0V8" stroke="#afb1b3" stroke-width="2"/><path d="M7 6L11 10.5L15 6Z" fill="#afb1b3"/></svg>
<div class="a" style="left:0px;top:966px;width:1920px;height:1px;background:#313131"></div>
<div class="a" style="left:0px;top:967px;width:1920px;height:27px;background:#3c3f41"></div>
<div class="a" style="left:615px;top:967px;width:71px;height:27px;background:#2d2f30"></div>
<div class="a" style="left:0px;top:994px;width:1920px;height:1px;background:#47494b"></div>
<div class="a" style="left:0px;top:995px;width:1920px;height:25px;background:#3c3f41"></div>
<svg style="left:40px;top:978px" width="12" height="17"><circle cx="2.5" cy="2.5" r="2.2" fill="#afb1b3"/><circle cx="2.5" cy="14" r="2.2" fill="#afb1b3"/><circle cx="9.5" cy="4.5" r="2.2" fill="#afb1b3"/><path d="M2.5 2.5V14M9.5 4.5C9.5 9 2.5 9 2.5 13" stroke="#afb1b3" stroke-width="1.8" fill="none"/></svg>
<div class="t" style="left:59.5px;top:977px;font:13.5px 'Liberation Sans';line-height:1;color:#bbbbbb;letter-spacing:-0.422px">Git</div>
<svg style="left:101px;top:975px" width="10" height="13"><path d="M0 0L10 6.5L0 13Z" fill="#afb1b3"/></svg>
<div class="t" style="left:120px;top:977px;font:13.5px 'Liberation Sans';line-height:1;color:#bbbbbb;letter-spacing:-0.755px">Run</div>
<svg style="left:167px;top:976px" width="13" height="12"><path d="M0 1H2M0 6H2M0 11H2M4 1H13M4 6H13M4 11H13" stroke="#afb1b3" stroke-width="1.8"/></svg>
<div class="t" style="left:186px;top:977px;font:13.5px 'Liberation Sans';line-height:1;color:#bbbbbb;letter-spacing:-0.691px">TODO</div>
<svg style="left:249px;top:975px" width="13" height="13"><circle cx="6.5" cy="6.5" r="6.3" fill="#afb1b3"/><path d="M6.5 2.5V7.5M6.5 9V11" stroke="#3c3f41" stroke-width="2"/></svg>
<div class="t" style="left:269px;top:977px;font:13.5px 'Liberation Sans';line-height:1;color:#bbbbbb;letter-spacing:-0.254px">Problems</div>
<svg style="left:351px;top:975px" width="15" height="13"><rect x="0" y="0" width="15" height="13" fill="#afb1b3"/><path d="M3 3L7 6.5L3 10" stroke="#3c3f41" stroke-width="1.6" fill="none"/><path d="M8 10.5H12" stroke="#3c3f41" stroke-width="1.5"/></svg>
<div class="t" style="left:371px;top:977px;font:13.5px 'Liberation Sans';line-height:1;color:#bbbbbb;letter-spacing:-0.127px">Terminal</div>
<svg style="left:446px;top:974px" width="16" height="16"><path d="M4 0.5H12L16 8L12 15.5H4L0 8Z" fill="#afb1b3"/><path d="M6 4.5L11.5 8L6 11.5Z" fill="#3c3f41"/></svg>
<div class="t" style="left:468px;top:977px;font:13.5px 'Liberation Sans';line-height:1;color:#bbbbbb;letter-spacing:-0.596px">Services</div>
<svg style="left:540px;top:974px" width="16" height="16"><circle cx="7" cy="7" r="5.8" fill="none" stroke="#afb1b3" stroke-width="1.8"/><path d="M7 3.5V7L9 8.5" stroke="#afb1b3" stroke-width="1.4" fill="none"/><path d="M8 8L15.5 12.5L8 16Z" fill="#afb1b3"/></svg>
<div class="t" style="left:561px;top:977px;font:13.5px 'Liberation Sans';line-height:1;color:#bbbbbb;letter-spacing:-0.096px">Profiler</div>
<svg style="left:626px;top:973px" width="17" height="17"><g transform="scale(0.85)"><g transform="translate(10 9.5) rotate(-45)"><rect x="-7.5" y="-8.5" width="13" height="5" fill="#afb1b3"/><rect x="-2.3" y="-4" width="4.6" height="14" fill="#afb1b3"/></g></g></svg>
<div class="t" style="left:649px;top:977px;font:13.5px 'Liberation Sans';line-height:1;color:#e0e0e0;letter-spacing:-0.306px">Build</div>
<svg style="left:701px;top:974px" width="16" height="16"><path d="M8 0.5L15.5 4.5L8 8.5L0.5 4.5Z" fill="#afb1b3"/><path d="M0.5 8L8 12L15.5 8M0.5 11.5L8 15.5L15.5 11.5" stroke="#afb1b3" stroke-width="1.6" fill="none"/></svg>
<div class="t" style="left:722.5px;top:977px;font:13.5px 'Liberation Sans';line-height:1;color:#bbbbbb;letter-spacing:-0.319px">Dependencies</div>
<svg style="left:15px;top:999px" width="17" height="17"><rect x="4.5" y="0.5" width="12" height="12" fill="none" stroke="#9a9a9a" stroke-width="1.3"/><path d="M1 4V16H13" stroke="#9a9a9a" stroke-width="1.3" fill="none"/></svg>
<div class="t" style="left:49px;top:1000px;font:16px 'Liberation Sans';line-height:1;color:#bbbbbb;letter-spacing:-0.538px">If you want to share your feedback later, use the Help | Send Feedback menu (today 1:08 AM)</div>
<div class="t" style="left:1578px;top:1000px;font:16px 'Liberation Sans';line-height:1;color:#bbbbbb;letter-spacing:-2.570px">CRLF</div>
<div class="t" style="left:1625px;top:1000px;font:16px 'Liberation Sans';line-height:1;color:#bbbbbb;letter-spacing:-1.266px">UTF-8</div>
<div class="t" style="left:1679px;top:1000px;font:16px 'Liberation Sans';line-height:1;color:#bbbbbb;letter-spacing:-1.006px">4 spaces</div>
<svg style="left:1752px;top:1000px" width="18" height="16"><circle cx="2.5" cy="2" r="1.8" fill="#afb1b3"/><circle cx="2.5" cy="14" r="1.8" fill="#afb1b3"/><circle cx="10" cy="2" r="1.8" fill="#afb1b3"/><path d="M2.5 2V14M10 2C10 8 3 8 2.5 13" stroke="#afb1b3" stroke-width="1.6" fill="none"/><circle cx="11.5" cy="12.5" r="3.5" fill="#499c54"/></svg>
<div class="t" style="left:1771px;top:1000px;font:16px 'Liberation Sans';line-height:1;color:#bbbbbb;letter-spacing:-0.352px">graal_migration</div>
<svg style="left:1889px;top:1000px" width="15" height="14"><path d="M2 6V4C2 1.5 3.5 0.5 5 0.5C6.5 0.5 8 1.5 8 4" stroke="#afb1b3" stroke-width="1.6" fill="none"/><rect x="4" y="6" width="10.5" height="8" fill="#afb1b3"/></svg>
<div class="a" style="left:0px;top:1020px;width:1920px;height:60px;background:#1b233a"></div>
<div class="a" style="left:0px;top:1020px;width:1920px;height:1px;background:#3a3f4c"></div>
<svg style="left:22px;top:1030px" width="36" height="38"><defs><linearGradient id="cl" x1="0" y1="0" x2="0" y2="1"><stop offset="0" stop-color="#b9cdf0"/><stop offset=".6" stop-color="#d3e0f5"/><stop offset="1" stop-color="#9fb6e2"/></linearGradient></defs><circle cx="24" cy="17" r="6" fill="#f08a1c"/><path d="M7 33C3.5 33 2.5 30.5 3 28.5C3.5 26 5.5 25 8 25C8.5 20 12 17.5 16 17.5C20 17.5 23 20 23.5 23C26.5 22.5 32.5 23.5 32.5 29C32.5 31.5 31 33 28 33Z" fill="url(#cl)"/></svg>
<svg style="left:38px;top:1027px" width="21" height="21"><circle cx="10.5" cy="10.5" r="10" fill="#f4939c"/></svg>
<div class="t" style="left:45px;top:1032px;font:13px 'Liberation Sans';line-height:1;color:#202020">1</div>
<div class="t" style="left:64px;top:1032px;font:16px 'Liberation Sans';line-height:1;color:#ffffff;letter-spacing:-0.742px">86°F</div>
<div class="t" style="left:64px;top:1052px;font:16px 'Liberation Sans';line-height:1;color:#dedede;letter-spacing:-0.148px">Mostly cloudy</div>
<svg style="left:487px;top:1036px" width="29" height="29"><defs><linearGradient id="wl" x1="0" y1="0" x2="1" y2="1"><stop offset="0" stop-color="#8cd9fb"/><stop offset="1" stop-color="#0b8de9"/></linearGradient></defs><rect x="0" y="0" width="14" height="14" rx="1" fill="url(#wl)"/><rect x="15" y="0" width="14" height="14" rx="1" fill="url(#wl)"/><rect x="0" y="15" width="14" height="14" rx="1" fill="url(#wl)"/><rect x="15" y="15" width="14" height="14" rx="1" fill="url(#wl)"/></svg>
<div class="a" style="left:533px;top:1030px;width:274px;height:40px;background:#373d4c;border-radius:20px;border:1px solid #454b59"></div>
<svg style="left:548px;top:1041px" width="19" height="19"><circle cx="8" cy="8" r="6.5" fill="none" stroke="#e0e0e0" stroke-width="2.2"/><path d="M12.8 12.8L18 18" stroke="#e0e0e0" stroke-width="2.4"/></svg>
<div class="t" style="left:579px;top:1043px;font:17px 'Liberation Sans';line-height:1;color:#dcdcdc;letter-spacing:-0.312px">Search</div>
<svg style="left:775px;top:1037px" width="27" height="27"><path d="M13.5 1A12.5 12.5 0 1 1 6 23.5L2 25.5L3.5 21A12.5 12.5 0 0 1 13.5 1Z" fill="#f4f8fc" stroke="#2f8df0" stroke-width="1.2"/><path d="M9.5 5.5L12.5 6.5V15L17.5 12.5L15 11L14 8.5L19.5 11.5V16.5L12.5 20.5L9.5 18.5Z" fill="#1b6fc9"/></svg>
<svg style="left:822px;top:1035px" width="32" height="30"><rect x="9" y="1" width="22" height="20" rx="2" fill="#f0f0f0"/><rect x="1" y="9" width="22" height="20" rx="2" fill="#8a8a8a" opacity="0.85"/></svg>
<svg style="left:877px;top:1034px" width="32" height="32"><defs><linearGradient id="tm" x1="0" y1="0" x2="1" y2="1"><stop offset="0" stop-color="#8c8ef0"/><stop offset="1" stop-color="#5b4fc4"/></linearGradient></defs><path d="M16 2C24 2 30 8 30 16C30 24 24 30 16 30C13 30 10 29 8 28L2 30L4 24C2.5 21.5 2 19 2 16C2 8 8 2 16 2Z" fill="url(#tm)"/><rect x="9" y="11" width="10" height="10" rx="2" fill="#fff"/><path d="M19 14L24 11V21L19 18Z" fill="#fff"/></svg>
<svg style="left:932px;top:1034px" width="32" height="30"><path d="M1 2.5C1 1.5 1.8 1 2.5 1H11L14 4H29.5C30.3 4 31 4.7 31 5.5V9H1Z" fill="#e3a81c"/><path d="M1 6H31V27.5C31 28.3 30.3 29 29.5 29H2.5C1.7 29 1 28.3 1 27.5Z" fill="#ffc83d"/><path d="M6 29V21.5C6 20.7 6.7 20 7.5 20H24.5C25.3 20 26 20.7 26 21.5V29Z" fill="#1f7fd8"/><rect x="11" y="23.5" width="10" height="1.6" fill="#0b4a8c"/></svg>
<svg style="left:987px;top:1035px" width="32" height="32"><defs><linearGradient id="ed1" x1="0" y1="0" x2="1" y2="0.6"><stop offset="0" stop-color="#1c8fe0"/><stop offset="0.55" stop-color="#2fb8d6"/><stop offset="1" stop-color="#6ad16a"/></linearGradient><linearGradient id="ed2" x1="0" y1="0" x2="0" y2="1"><stop offset="0" stop-color="#0f6cc4"/><stop offset="1" stop-color="#0a4f9c"/></linearGradient></defs><path d="M16 1C24.5 1 31 7 31 14.5C31 19.5 27.5 22 23.5 22C20 22 17.5 20.5 17.5 18.5C17.5 17.5 18.5 17 18.5 15.5C18.5 12.5 15.5 10.5 12 10.5C6.5 10.5 2 15 1.2 19.5C0.8 9 7.5 1 16 1Z" fill="url(#ed1)"/><path d="M1.2 19.5C2 15 6.5 10.5 12 10.5C15.5 10.5 18.5 12.5 18.5 15.5C18 14.5 16.5 14 15 14C10.5 14 8 17.5 8 21.5C8 26.5 12.5 30.5 18 31C9 32 1.2 26.5 1.2 19.5Z" fill="url(#ed2)"/><path d="M18 31C12.5 30.5 8 26.5 8 21.5C8 17.5 10.5 14 15 14C16.5 14 18 14.5 18.5 15.5C18.5 17 17.5 17.5 17.5 18.5C17.5 20.5 20 22 23.5 22C27.5 22 31 19.5 31 14.5C31.5 23.5 25.5 30.5 18 31Z" fill="#1b233a" opacity="0"/></svg>
<svg style="left:1041px;top:1034px" width="32" height="32"><path d="M11 7V5C11 3 13 2 16 2C19 2 21 3 21 5V7" fill="none" stroke="#3aa0f0" stroke-width="2"/><rect x="2" y="7" width="28" height="23" rx="3" fill="#f3f3f3"/><rect x="10" y="12" width="5.5" height="5.5" fill="#f25022"/><rect x="16.5" y="12" width="5.5" height="5.5" fill="#7fba00"/><rect x="10" y="18.5" width="5.5" height="5.5" fill="#00a4ef"/><rect x="16.5" y="18.5" width="5.5" height="5.5" fill="#ffb900"/></svg>
<svg style="left:1097px;top:1034px" width="32" height="32"><rect x="1" y="1" width="30" height="30" fill="#1ba1e2"/><path d="M10 6V26H23V21.5H15V6Z" fill="#fff"/></svg>
<svg style="left:1152px;top:1034px" width="32" height="32"><path d="M2 19L16 26L30 19V23L16 30L2 23Z" fill="#2d9be0"/><path d="M2 15L16 22L30 15V19L16 26L2 19Z" fill="#e8262b"/><path d="M2 11L16 18L30 11V15L16 22L2 15Z" fill="#f6d21c"/><path d="M2 10L16 3L30 10L16 17Z" fill="#5bbf2a"/><path d="M11 11L19 8L17 10.5L21 10" stroke="#fff" stroke-width="1" fill="none"/></svg>
<svg style="left:1206px;top:1034px" width="32" height="32"><defs><linearGradient id="op" x1="0" y1="0" x2="1" y2="1"><stop offset="0" stop-color="#ff1b2d"/><stop offset="1" stop-color="#a70014"/></linearGradient></defs><ellipse cx="16" cy="16" rx="14" ry="14.5" fill="url(#op)"/><ellipse cx="16" cy="16" rx="6" ry="11.5" fill="#1b233a"/></svg>
<svg style="left:1261px;top:1034px" width="32" height="32"><polygon points="3,4 12,1 20,3 30,3 31,16 29,30 17,31 8,28 2,30 1,15" fill="#ff318c"/><polygon points="17,1 30,3 31,16 29,30 17,31 22,15" fill="#07c3f2"/><polygon points="3,4 12,1 17,3 2,18" fill="#fcf84a"/><rect x="7" y="7" width="18" height="18" fill="#000"/><text x="9" y="16" font-size="8.5" font-weight="bold" fill="#fff" font-family="Liberation Sans">IJ</text><rect x="9" y="21" width="7" height="1.6" fill="#fff"/></svg>
<svg style="left:1316px;top:1034px" width="32" height="32"><circle cx="16" cy="16" r="15" fill="#db4437"/><path d="M16 16L3 8.5A15 15 0 0 1 29 8.5Z" fill="#db4437"/><path d="M16 16L29 8.5A15 15 0 0 1 16 31Z" fill="#f4c20d"/><path d="M16 16L16 31A15 15 0 0 1 3 8.5Z" fill="#0f9d58"/><circle cx="16" cy="16" r="7" fill="#fff"/><circle cx="16" cy="16" r="5.5" fill="#4285f4"/></svg>
<svg style="left:1371px;top:1034px" width="32" height="32"><path d="M23 1L31 5V27L23 31L9 18L4 22L1 20V12L4 10L9 14ZM23 9L14 16L23 23Z" fill="#2b8fd6"/><path d="M23 1L31 5V27L23 31Z" fill="#1f7ac0"/></svg>
<div class="a" style="left:945px;top:1070px;width:6px;height:3px;background:#9aa0ab;border-radius:1.5px"></div>
<div class="a" style="left:1274px;top:1070px;width:6px;height:3px;background:#9aa0ab;border-radius:1.5px"></div>
<div class="a" style="left:1329px;top:1070px;width:6px;height:3px;background:#9aa0ab;border-radius:1.5px"></div>
<div class="a" style="left:1384px;top:1070px;width:6px;height:3px;background:#9aa0ab;border-radius:1.5px"></div>
<svg style="left:1444px;top:1045px" width="14" height="9"><path d="M1 8L7 2L13 8" stroke="#f0f0f0" stroke-width="1.6" fill="none"/></svg>
<svg style="left:1480px;top:1041px" width="22" height="14"><path d="M5 13C2 13 0.5 11 0.5 9C0.5 7 2 5.5 4.5 5.5C5.5 2.5 8 1 11 1C14.5 1 17 3.5 17.5 6.5C20 6.5 21.5 8.5 21.5 10C21.5 12 20 13 18 13Z" fill="#d9d9d9"/></svg>
<svg style="left:1520px;top:1039px" width="22" height="22"><path d="M3 9C4 5 7.5 2 11.5 2C14.5 2 17 3.5 18.5 5.5" stroke="#f0f0f0" stroke-width="1.6" fill="none"/><path d="M19.5 1.5V6.5H14.5" stroke="#f0f0f0" stroke-width="1.6" fill="none"/><path d="M2.5 15.5V20.5" stroke="#f0f0f0" stroke-width="1.6"/><path d="M2.5 20.5H7.5" stroke="#f0f0f0" stroke-width="1.6"/><path d="M3 19C4.5 21 7 22 9 22" stroke="#f0f0f0" stroke-width="1.6" fill="none"/><circle cx="15.5" cy="15.5" r="5" fill="#f7931e"/></svg>
<svg style="left:1560px;top:1042px" width="21" height="15"><rect x="0.8" y="0.8" width="19.4" height="13.4" rx="2" fill="none" stroke="#f0f0f0" stroke-width="1.5"/><path d="M4 4.5H6M8 4.5H10M12 4.5H14M16 4.5H17M4 7.5H6M8 7.5H10M12 7.5H14M16 7.5H17M6 10.5H15" stroke="#f0f0f0" stroke-width="1.4"/></svg>
<svg style="left:1600px;top:1042px" width="20" height="16"><rect x="0.8" y="0.8" width="18.4" height="14.4" rx="2.5" fill="none" stroke="#f0f0f0" stroke-width="1.5"/><path d="M1 10H19M10 10V15" stroke="#f0f0f0" stroke-width="1.5"/></svg>
<div class="t" style="left:1644.5px;top:1034px;font:14.5px 'Liberation Sans';line-height:1;color:#ffffff;letter-spacing:-0.807px">ENG</div>
<div class="t" style="left:1651px;top:1054px;font:14.5px 'Liberation Sans';line-height:1;color:#ffffff;letter-spacing:0.250px">IN</div>
<svg style="left:1696px;top:1042px" width="20" height="15"><path d="M1 5.5C6 0.5 14 0.5 19 5.5" stroke="#f0f0f0" stroke-width="1.6" fill="none"/><path d="M4 8.5C7.5 5 12.5 5 16 8.5" stroke="#f0f0f0" stroke-width="1.6" fill="none"/><path d="M7 11.5C8.5 10 11.5 10 13 11.5" stroke="#f0f0f0" stroke-width="1.6" fill="none"/><circle cx="10" cy="14" r="1.3" fill="#f0f0f0"/></svg>
<svg style="left:1725px;top:1041px" width="21" height="17"><path d="M1 5.5H5L10 1V16L5 11.5H1Z" fill="none" stroke="#f0f0f0" stroke-width="1.5"/><path d="M13 5.5C14.5 7 14.5 10 13 11.5M15.5 3.5C18 6 18 11 15.5 13.5M18 1.5C21.5 5 21.5 12 18 15.5" stroke="#f0f0f0" stroke-width="1.5" fill="none"/></svg>
<svg style="left:1756px;top:1043px" width="21" height="12"><rect x="0.8" y="0.8" width="17" height="10.4" rx="2.5" fill="none" stroke="#f0f0f0" stroke-width="1.5"/><rect x="3" y="3" width="8" height="6" rx="1" fill="#f0f0f0"/><rect x="18.5" y="4" width="2" height="4" fill="#f0f0f0"/></svg>
<div class="t" style="left:1802px;top:1032px;font:15px 'Liberation Sans';line-height:1;color:#ffffff;letter-spacing:-0.049px">10:00 AM</div>
<div class="t" style="left:1797px;top:1052px;font:15px 'Liberation Sans';line-height:1;color:#ffffff;letter-spacing:0.141px">7/21/2023</div>
<svg style="left:1875px;top:1040px" width="20" height="20"><circle cx="10" cy="10" r="10" fill="#3ad6e6"/></svg>
<div class="t" style="left:1879px;top:1046px;font:11px 'Liberation Sans';line-height:1;color:#10202a;letter-spacing:0.289px">11</div>
</body></html>
